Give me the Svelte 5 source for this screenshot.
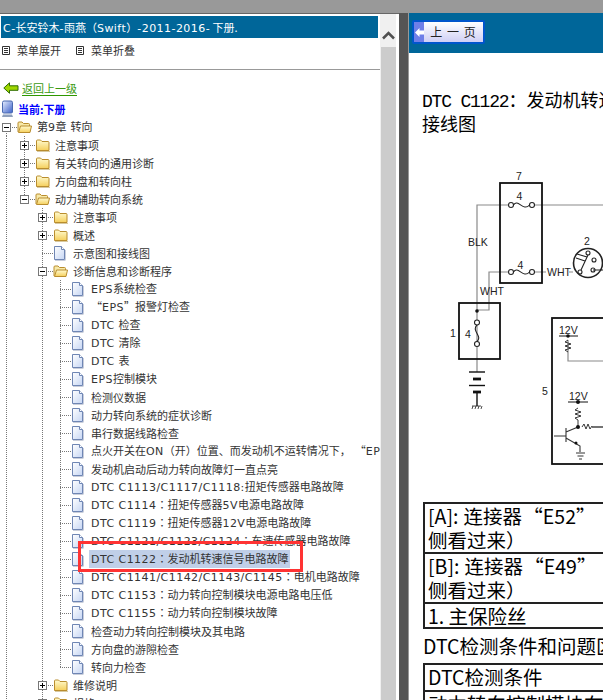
<script>
  // l = tree level, x = expander, t = icon type
  const rows = [
    { l: 0, x: '-', t: 'open', s: '第9章 转向' },
    { l: 1, x: '+', t: 'folder', s: '注意事项' },
    { l: 1, x: '+', t: 'folder', s: '有关转向的通用诊断' },
    { l: 1, x: '+', t: 'folder', s: '方向盘和转向柱' },
    { l: 1, x: '-', t: 'open', s: '动力辅助转向系统', last: true },
    { l: 2, x: '+', t: 'folder', s: '注意事项' },
    { l: 2, x: '+', t: 'folder', s: '概述' },
    { l: 2, t: 'file', s: '示意图和接线图' },
    { l: 2, x: '-', t: 'open', s: '诊断信息和诊断程序' },
    { l: 3, t: 'file', s: 'EPS系统检查' },
    { l: 3, t: 'file', s: '“EPS”报警灯检查' },
    { l: 3, t: 'file', s: 'DTC 检查' },
    { l: 3, t: 'file', s: 'DTC 清除' },
    { l: 3, t: 'file', s: 'DTC 表' },
    { l: 3, t: 'file', s: 'EPS控制模块' },
    { l: 3, t: 'file', s: '检测仪数据' },
    { l: 3, t: 'file', s: '动力转向系统的症状诊断' },
    { l: 3, t: 'file', s: '串行数据线路检查' },
    { l: 3, t: 'file', s: '点火开关在ON（开）位置、而发动机不运转情况下， “EPS”故障灯' },
    { l: 3, t: 'file', s: '发动机启动后动力转向故障灯一直点亮' },
    { l: 3, t: 'file', s: 'DTC C1113/C1117/C1118:扭矩传感器电路故障' },
    { l: 3, t: 'file', s: 'DTC C1114：扭矩传感器5V电源电路故障' },
    { l: 3, t: 'file', s: 'DTC C1119：扭矩传感器12V电源电路故障' },
    { l: 3, t: 'file', s: 'DTC C1121/C1123/C1124：车速传感器电路故障' },
    { l: 3, t: 'file', s: 'DTC C1122：发动机转速信号电路故障', sel: true },
    { l: 3, t: 'file', s: 'DTC C1141/C1142/C1143/C1145：电机电路故障' },
    { l: 3, t: 'file', s: 'DTC C1153：动力转向控制模块电源电路电压低' },
    { l: 3, t: 'file', s: 'DTC C1155：动力转向控制模块故障' },
    { l: 3, t: 'file', s: '检查动力转向控制模块及其电路' },
    { l: 3, t: 'file', s: '方向盘的游隙检查' },
    { l: 3, t: 'file', s: '转向力检查', last: true },
    { l: 2, x: '+', t: 'folder', s: '维修说明' },
    { l: 2, x: '+', t: 'folder', s: '规格' }
  ];

  // latin, centred colon and cjk need different fonts
  function runs(s) {
    return s.match(/[\x21-\x7f ]+|：|[^\x21-\x7f ：]+/g).map((r) => ({
      r,
      c: r === '：' ? 'pct' : /^[\x21-\x7f ]/.test(r) ? 'lat' : ''
    }));
  }

  // which guide columns stay drawn left of a row
  function guide(row, i) {
    if (i === 0) return true;
    if (i === 2) return row.l === 3;
    return false;
  }
</script>

{#snippet folder()}
  <svg width="16" height="14" viewBox="0 0 16 14">
    <path d="M1.5 12.5V3q0-1 1-1h3l1.5 1.5h6q1 0 1 1v8z" fill="url(#fold)" stroke="#b98d2e" />
    <path d="M2 13.5h13" stroke="#d8c9a0" />
  </svg>
{/snippet}

{#snippet openFolder()}
  <svg width="16" height="14" viewBox="0 0 16 14">
    <path d="M1 12V3q0-1 1-1h3l1.5 1.5h5q1 0 1 1V6" fill="#f7e9a8" stroke="#b98d2e" />
    <path d="M1.5 12.5L3.5 6h11l-1.5 6.5z" fill="url(#fold)" stroke="#b98d2e" />
  </svg>
{/snippet}

{#snippet file()}
  <svg width="13" height="15" viewBox="0 0 13 15">
    <path d="M1.5 .5h7l3 3v10h-10z" fill="url(#page)" stroke="#6f86b4" />
    <path d="M8.5 .5v3h3" fill="#fff" stroke="#6f86b4" />
    <path d="M12.5 4v10.500M2 14.500h10" stroke="#c9cedb" />
  </svg>
{/snippet}

<svg class="defs" width="0" height="0">
  <defs>
    <linearGradient id="fold" x1="0" y1="0" x2="0" y2="1">
      <stop offset="0" stop-color="#fffbd0" />
      <stop offset="1" stop-color="#f5cf5c" />
    </linearGradient>
    <linearGradient id="page" x1="0" y1="0" x2="1" y2="1">
      <stop offset="0" stop-color="#ffffff" />
      <stop offset="1" stop-color="#c6d6f4" />
    </linearGradient>
    <linearGradient id="mon" x1="0" y1="0" x2="1" y2="1">
      <stop offset="0" stop-color="#e8f0ff" />
      <stop offset="1" stop-color="#3a5fc8" />
    </linearGradient>
  </defs>
</svg>

<div class="page">
  <div class="topbar"></div>
  <div class="panes">
    <div class="left">
      <div class="content">
        <div class="title"><span class="lat">C-</span>长安铃木<span class="lat">-</span>雨燕（<span class="lat">Swift</span>）<span class="lat">-2011-2016-</span> 下册.</div>
        <div class="tools">
          <span class="tool">
            <svg width="8" height="9" viewBox="0 0 8 9"><path d="M.5.500h7v8h-7zM2 2.500h4M2 4.500h4M2 6.500h4" fill="none" stroke="#333" /></svg>
            菜单展开
          </span>
          <span class="tool">
            <svg width="8" height="9" viewBox="0 0 8 9"><path d="M.5.500h7v8h-7zM2 2.500h4M2 4.500h4M2 6.500h4" fill="none" stroke="#333" /></svg>
            菜单折叠
          </span>
        </div>
        <div class="back">
          <svg width="16" height="12" viewBox="0 0 16 12">
            <path d="M.8 6L6.500.8v3h8.500v4.500H6.500v3z" fill="#9fd600" stroke="#2f6d00" />
          </svg>
          <span class="backlink">返回上一级</span>
        </div>
        <div class="tree">
          <div class="cur">
            <svg width="13" height="18" viewBox="0 0 13 18">
              <path d="M3 1h7q1.500 0 1.500 1.500V12q0 1-1.500 1H3q-1.500 0-1.500-1V2.500Q1.500 1 3 1z" fill="url(#mon)" stroke="#4a6ab0" />
              <path d="M2 14.500h9l1 2.500H1z" fill="#8fa0bc" />
            </svg>
            <span>当前:下册</span>
          </div>
          {#each rows as row}
            <div class="row">
              {#each Array(row.l) as _, i}
                <span class="cell" class:guide={guide(row, i)}></span>
              {/each}
              <span class="conn" class:lastc={row.last} class:root={row.l === 0}>
                {#if row.x}
                  <svg class="exp" width="9" height="9" viewBox="0 0 9 9">
                    <rect x=".5" y=".5" width="8" height="8" fill="#fff" stroke="#777" />
                    <path d={row.x === '+' ? 'M2 4.500h5M4.500 2v5' : 'M2 4.500h5'} stroke="#000" />
                  </svg>
                {/if}
              </span>
              <span class="ico">
                {#if row.t === 'folder'}
                  {@render folder()}
                {:else if row.t === 'open'}
                  {@render openFolder()}
                {:else}
                  {@render file()}
                {/if}
              </span>
              <span class="lbl" class:sel={row.sel}>
                {#each runs(row.s) as p}<span class={p.c}>{p.r}</span>{/each}
              </span>
            </div>
          {/each}
          <div class="redbox"></div>
        </div>
      </div>
      <div class="scroll">
        <div class="sbtn">
          <svg width="13" height="9" viewBox="0 0 13 9"><path d="M1 7.500L6.500 2 12 7.500" fill="none" stroke="#505050" stroke-width="2.500" /></svg>
        </div>
        <div class="thumb"></div>
      </div>
    </div>
    <div class="split"></div>
    <div class="right">
      <div class="head">
        <div class="prev">
          <span class="prevarrow">
            <svg width="9" height="9" viewBox="0 0 9 9"><path d="M0 4.500L4.500 0v2.500H9v4H4.500V9z" fill="#fff" /></svg>
          </span>
          <span class="prevtxt">上 一 页</span>
        </div>
      </div>
      <h1><span class="mono">DTC C1122</span>：发动机转速信号电路故障<br />接线图</h1>

      <svg class="diagram" width="195" height="310" viewBox="408 160 195 310">
        <g fill="none" stroke="#8a8a8a" stroke-width="1.200">
          <path d="M510 205H476V360M533 205H603M510 272H488V310H476M534 272H545M568 272H572M476 359V372" />
          <path d="M567 340V361H603" />
        </g>
        <g fill="none" stroke="#111" stroke-width="1.800">
          <rect x="499" y="183" width="42" height="100" />
          <rect x="458" y="303" width="41" height="56" />
          <rect x="551" y="318" width="60" height="146" />
        </g>
        <g fill="#fff" stroke="#222" stroke-width="1.100">
          <circle cx="510" cy="205" r="2.500" />
          <circle cx="531" cy="205" r="2.500" />
          <circle cx="510" cy="272" r="2.500" />
          <circle cx="531" cy="272" r="2.500" />
          <circle cx="476" cy="322.500" r="2.500" />
          <circle cx="476" cy="344" r="2.500" />
        </g>
        <g fill="none" stroke="#222" stroke-width="1.100">
          <path d="M512.500 205C517 198 522 212 528.500 205M512.500 272C517 265 522 279 528.500 272M476 325C470 331 482 336 476 341.500" />
          <circle cx="587" cy="263" r="14.500" stroke-width="1.600" />
          <circle cx="587" cy="253" r="2" />
          <circle cx="593" cy="260" r="2" />
          <circle cx="592" cy="270" r="2" />
          <circle cx="579" cy="272" r="2" />
          <path d="M576 254L586 257M575 258L584 261M580 270L587 255M592 270H603" />
          <path d="M471 406h9M472 406l-1 3M475 406l-1 3M478 406l-1 3M481 406l-1 3" stroke-width=".8" />
          <path d="M567 340l-3 2 6 2-6 2 6 2-6 2 3 2M577 408l-3 2 6 2-6 2 6 2-6 2 3 2V427M581 427l2-3 2 5 2-5 2 5 2-3" stroke-width=".9" />
          <path d="M553 436h12M565 428v14M565 432l12-5M565 438l14 8v6M575 453h9M576.500 456h6M578 459h3" stroke="#333" />
          <path d="M591 427H603" stroke="#000" />
        </g>
        <g stroke="#111" fill="#111">
          <path d="M468 372h16" stroke-width="1.400" />
          <path d="M472 379h8" stroke-width="2.800" />
          <path d="M468 385.500h16" stroke-width="1.400" />
          <path d="M472 392h8" stroke-width="2.800" />
          <path d="M476 393v13" stroke-width="1.400" />
          <path d="M558 336h19M567 402h20" stroke-width="1" />
          <circle cx="567" cy="336" r="1.800" stroke="none" />
          <circle cx="577" cy="402" r="2" stroke="none" />
          <circle cx="577" cy="427" r="2" stroke="none" />
          <circle cx="476" cy="311" r="1.800" stroke="none" />
          <circle cx="575" cy="443" r="1.500" stroke="none" />
        </g>
        <g class="dtxt">
          <text x="518" y="180" text-anchor="middle">7</text>
          <text x="518.500" y="200" text-anchor="middle">4</text>
          <text x="519.500" y="269" text-anchor="middle">4</text>
          <text x="467" y="246">BLK</text>
          <text x="479" y="295">WHT</text>
          <text x="546" y="276">WHT</text>
          <text x="586" y="245" text-anchor="middle">2</text>
          <text x="467" y="338" text-anchor="middle">4</text>
          <text x="452" y="337" text-anchor="middle">1</text>
          <text x="544" y="395" text-anchor="middle">5</text>
          <text x="558" y="334">12V</text>
          <text x="568" y="400">12V</text>
        </g>
      </svg>

      <div class="ctable first">
        <div class="crow h2">[A]:<span class="gap">连接器</span> “E52”<br />侧看过来）</div>
        <div class="crow h2">[B]:<span class="gap">连接器</span> “E49”<br />侧看过来）</div>
        <div class="crow short">1. 主保险丝</div>
      </div>
      <div class="h3">DTC检测条件和问题区域</div>
      <div class="ctable">
        <div class="crow h1c">DTC检测条件</div>
        <div class="crow h1c">动力转向控制模块在发动机</div>
      </div>
    </div>
  </div>
</div>

<style>
:global(body){margin:0;background:#fff}
.defs{position:absolute}
.page{width:603px;height:700px;overflow:hidden;font-family:"DejaVu Sans","Noto Sans CJK SC",sans-serif;font-size:11px;color:#333}
.topbar{height:13px;background:#999}
.panes{display:flex;height:687px}

.left{width:399px;flex:none;display:flex;border-top:1px solid #666;box-sizing:border-box}
.content{width:380px;flex:none;overflow:hidden}
.title{margin:2px 2px 0 1px;height:22px;line-height:22px;padding-left:2px;background:#006699;color:#fff;white-space:nowrap;font-family:"Noto Sans CJK SC","DejaVu Sans",sans-serif}
.lat{font-family:"DejaVu Sans",sans-serif;letter-spacing:.45px}
.pct{font-family:"Noto Sans CJK TC",sans-serif}
.tools{height:27px;display:flex;align-items:flex-start;gap:6px;padding:4px 0 0 2px;border-bottom:1px solid #999;font-family:"Noto Sans CJK SC",sans-serif}
.tool{display:flex;align-items:center;gap:7px;width:68px;height:16px}
.back{height:29px;display:flex;align-items:center;gap:3px;padding:6px 0 0 3px;box-sizing:border-box;margin-top:1px}
.back svg{margin-top:-2px}
.backlink{color:#3a9a10;border-bottom:1px solid #2f9800;line-height:13px;font-family:"Noto Sans CJK SC",sans-serif}
.tree{position:relative}
.cur{height:18px;display:flex;align-items:center;gap:4px;padding-left:1px;color:#00f;font-weight:700;font-family:"Noto Sans CJK SC",sans-serif}
.row{height:18px;display:flex;align-items:center;white-space:nowrap}
.cell{width:18px;height:18px;flex:none}
.guide{background:repeating-linear-gradient(#777 0 1px,transparent 1px 2px) 6px 0/1px 100% no-repeat}
.conn{width:17px;height:18px;flex:none;display:flex;align-items:center;background:
  repeating-linear-gradient(90deg,#777 0 1px,transparent 1px 2px) 6px 9px/11px 1px no-repeat,
  repeating-linear-gradient(#777 0 1px,transparent 1px 2px) 6px 0/1px 100% no-repeat}
.lastc{background:
  repeating-linear-gradient(90deg,#777 0 1px,transparent 1px 2px) 6px 9px/11px 1px no-repeat,
  repeating-linear-gradient(#777 0 1px,transparent 1px 2px) 6px 0/1px 10px no-repeat}
.root{background:
  repeating-linear-gradient(90deg,#777 0 1px,transparent 1px 2px) 6px 9px/11px 1px no-repeat,
  repeating-linear-gradient(#777 0 1px,transparent 1px 2px) 6px 9px/1px 9px no-repeat}
.exp{margin-left:2px;flex:none}
.ico{width:16px;height:15px;flex:none;display:flex;align-items:center}
.lbl{margin-left:4px;line-height:17px;font-family:"Noto Sans CJK SC",sans-serif}
.sel{background:#c0cfe8;margin-left:2px;padding:0 2px}
.redbox{position:absolute;left:78px;top:441px;width:225px;height:31px;box-sizing:border-box;border:3px solid #f33}

.scroll{width:16px;flex:none;background:#f0f0f0;display:flex;flex-direction:column}
.sbtn{height:33px;display:flex;align-items:flex-end;justify-content:center;padding-bottom:7px;box-sizing:border-box}
.thumb{flex:1;margin-left:1px;background:#ccc}

.split{width:9px;flex:none;background:#555;border-right:1px solid #999;box-sizing:content-box}
.right{flex:1;min-width:0;overflow:hidden;color:#000;font-family:"Noto Sans CJK SC",sans-serif}
.head{height:40px;background:#006699;padding:7px 0 0 3px;box-sizing:border-box}
.prev{width:69px;height:20px;border:2px solid #0055cc;display:flex;background:linear-gradient(#fff,#cfcff5);border-radius:2px}
.prevarrow{width:10px;background:#6f7fe8;display:flex;align-items:center;justify-content:center}
.prevtxt{flex:1;text-align:center;line-height:20px;font-size:12px;letter-spacing:1px;color:#222}
h1{margin:34px 0 0 13px;font-weight:400;font-size:18px;line-height:24px;white-space:nowrap}
.mono{font-family:"Liberation Mono",monospace;letter-spacing:-1.2px;line-height:0}
.diagram{display:block;margin-top:25px}
.ctable{margin:0 0 0 14px;width:320px;border:2px solid #222;box-sizing:border-box;font-size:19.500px;line-height:24px;white-space:nowrap}
.first{margin-top:32px}
.crow{padding-left:3px;border-top:2px solid #222}
.crow:first-child{border-top:0}
.h2{height:48px;word-spacing:-3px}
.h1c{height:25px}
.short{height:23px}
.gap{margin-left:5px}
.h3{margin:5px 0 5px 14px;font-size:19.500px;line-height:24px;white-space:nowrap}
.dtxt text{font-family:"Liberation Sans",sans-serif;font-size:10.500px;fill:#222}
</style>
